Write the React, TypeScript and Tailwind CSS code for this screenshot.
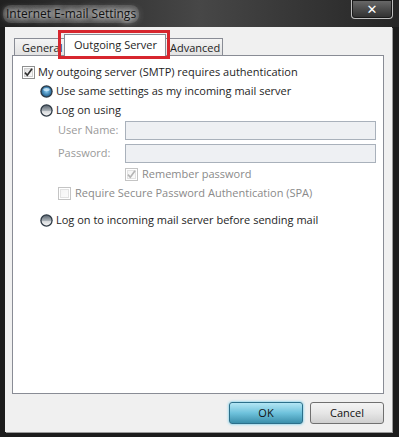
const font = { fontFamily: '"Open Sans", "Noto Sans", sans-serif' };

function CheckBox({ checked, disabled }: { checked?: boolean; disabled?: boolean }) {
  const stroke = disabled ? "#c4c4c4" : "#8e8f8f";
  return (
    <svg width="13" height="13" viewBox="0 0 13 13" className="shrink-0">
      <defs>
        <linearGradient id={disabled ? "cbd" : "cb"} x1="0" y1="0" x2="1" y2="1">
          <stop offset="0" stopColor={disabled ? "#f4f4f4" : "#dcdcdc"} />
          <stop offset="1" stopColor={disabled ? "#fbfbfb" : "#fdfdfd"} />
        </linearGradient>
      </defs>
      <rect x="0.5" y="0.5" width="12" height="12" fill="#fff" stroke={stroke} />
      <rect x="2.5" y="2.5" width="8" height="8" fill={`url(#${disabled ? "cbd" : "cb"})`} stroke={disabled ? "#e2e2e2" : "#cfcfcf"} />
      {checked && (
        <path
          d="M3 6.6 L5.3 9.2 L10 2.8"
          fill="none"
          stroke={disabled ? "#b4b4b4" : "#2f2f2f"}
          strokeWidth="1.7"
        />
      )}
    </svg>
  );
}

function Radio({ selected }: { selected?: boolean }) {
  return (
    <svg width="13" height="13" viewBox="0 0 13 13" className="shrink-0">
      <defs>
        <radialGradient id="rsel" cx="0.5" cy="0.45" r="0.6">
          <stop offset="0" stopColor="#8ccff5" />
          <stop offset="1" stopColor="#1a5a8a" />
        </radialGradient>
        <linearGradient id="roff" x1="0" y1="0" x2="0" y2="1">
          <stop offset="0" stopColor="#5f6a74" />
          <stop offset="0.5" stopColor="#a9b0b6" />
          <stop offset="0.55" stopColor="#d4d7da" />
          <stop offset="1" stopColor="#f4f4f4" />
        </linearGradient>
      </defs>
      <circle cx="6.5" cy="6.5" r="6.2" fill="#2e3944" />
      <circle cx="6.5" cy="6.5" r="4.9" fill={selected ? "url(#rsel)" : "url(#roff)"} />
      {selected && <ellipse cx="6.5" cy="4.6" rx="3.2" ry="1.7" fill="#d9f0fd" opacity="0.75" />}
    </svg>
  );
}

export default function App() {
  return (
    <div
      className="relative flex h-[437px] w-[399px] flex-col overflow-hidden bg-[#1c1c1c] text-[11px] text-[#1e1e1e]"
      style={font}
    >
      {/* Title bar */}
      <div className="flex h-[27px] shrink-0 items-start justify-between bg-gradient-to-r from-[#202020] via-[#474747] to-[#262626]">
        <div className="ml-[3px] mt-[5px] rounded-[8px] bg-[#8a8a8a]/30 px-[3px] text-[12px] leading-[18px] text-[#111] [text-shadow:0_0_5px_#eee,0_0_8px_#ddd,0_0_10px_#ccc]">
          Internet E-mail Settings
        </div>
        <div className="mr-[6px] flex h-[19px] w-[42px] items-center justify-center rounded-b-[4px] border border-t-0 border-[#bdbdbd] bg-gradient-to-b from-[#6b6b6b] to-[#2f2f2f] shadow-[inset_0_0_0_1px_#1a1a1a]">
          <span className="text-[13px] font-bold leading-none text-white" style={{ fontFamily: '"DejaVu Sans", sans-serif' }}>
            ✕
          </span>
        </div>
      </div>

      {/* Client area */}
      <div className="mb-[5px] ml-[5px] mr-[7px] flex flex-1 flex-col bg-[#f0f0f0] pl-[7px] pr-[8px] shadow-[1px_1px_0_#9a9a9a]">
        {/* Tabs */}
        <div className="flex h-[28px] items-end pl-[2px]">
          <div className="-mb-px h-[18px] w-[52px] overflow-hidden whitespace-nowrap border border-b-0 border-[#898c95] bg-gradient-to-b from-[#f4f4f4] to-[#e1e1e1] pl-[7px] pt-[1px] leading-[16px]">
            General
          </div>
          <div className="relative z-10 -mb-px -ml-[2px] h-[22px] w-[102px] border border-b-0 border-[#898c95] bg-white pl-[9px] pt-[2px] leading-[16px]">
            Outgoing Server
          </div>
          <div className="-mb-px -ml-px h-[18px] w-[58px] border border-b-0 border-[#898c95] bg-gradient-to-b from-[#f4f4f4] to-[#e1e1e1] pl-[4px] pt-[1px] leading-[16px]">
            Advanced
          </div>
        </div>

        {/* Panel */}
        <div className="flex h-[339px] flex-col border border-[#898c95] bg-white pl-[9px] pt-[7px]">
          <label className="flex h-[19px] items-center gap-[3px]">
            <CheckBox checked />
            <span>My outgoing server (SMTP) requires authentication</span>
          </label>
          <label className="flex h-[19px] items-center gap-[3px] pl-[18px]">
            <Radio selected />
            <span>Use same settings as my incoming mail server</span>
          </label>
          <label className="flex h-[19px] items-center gap-[3px] pl-[18px]">
            <Radio />
            <span>Log on using</span>
          </label>

          <div className="mt-[1px] flex h-[19px] items-center pl-[36px] text-[#9a9a9a]">
            <span className="w-[67px]">User Name:</span>
            <div className="h-[19px] w-[251px] border border-[#a9b1bb] bg-[#eef0f3]" />
          </div>
          <div className="mt-[4px] flex h-[19px] items-center pl-[36px] text-[#9a9a9a]">
            <span className="w-[67px]">Password:</span>
            <div className="h-[19px] w-[251px] border border-[#a9b1bb] bg-[#eef0f3]" />
          </div>
          <label className="mt-[2px] flex h-[19px] items-center gap-[4px] pl-[103px] text-[#8a8a8a]">
            <CheckBox checked disabled />
            <span>Remember password</span>
          </label>
          <label className="flex h-[18px] items-center gap-[4px] pl-[36px] text-[#8a8a8a]">
            <CheckBox disabled />
            <span>Require Secure Password Authentication (SPA)</span>
          </label>

          <label className="mt-[9px] flex h-[19px] items-center gap-[3px] pl-[18px]">
            <Radio />
            <span>Log on to incoming mail server before sending mail</span>
          </label>
        </div>

        {/* Buttons */}
        <div className="mt-[8px] flex justify-end gap-[7px]">
          <button className="h-[22px] w-[74px] rounded-[3px] border border-[#2c6f8a] bg-gradient-to-b from-[#b3e6f4] via-[#6ec2dc] to-[#3b8fab] text-[11px] leading-[18px] text-[#111] shadow-[0_0_3px_#4fc3e8]">
            OK
          </button>
          <button className="h-[22px] w-[74px] rounded-[3px] border border-[#707070] bg-gradient-to-b from-[#f4f4f4] via-[#e6e6e6] to-[#cfcfcf] text-[11px] leading-[18px] text-[#111]">
            Cancel
          </button>
        </div>
      </div>

      {/* Annotation box */}
      <div className="absolute left-[58px] top-[30px] z-20 h-[29px] w-[112px] border-[3px] border-[#d7262e]" />
    </div>
  );
}
